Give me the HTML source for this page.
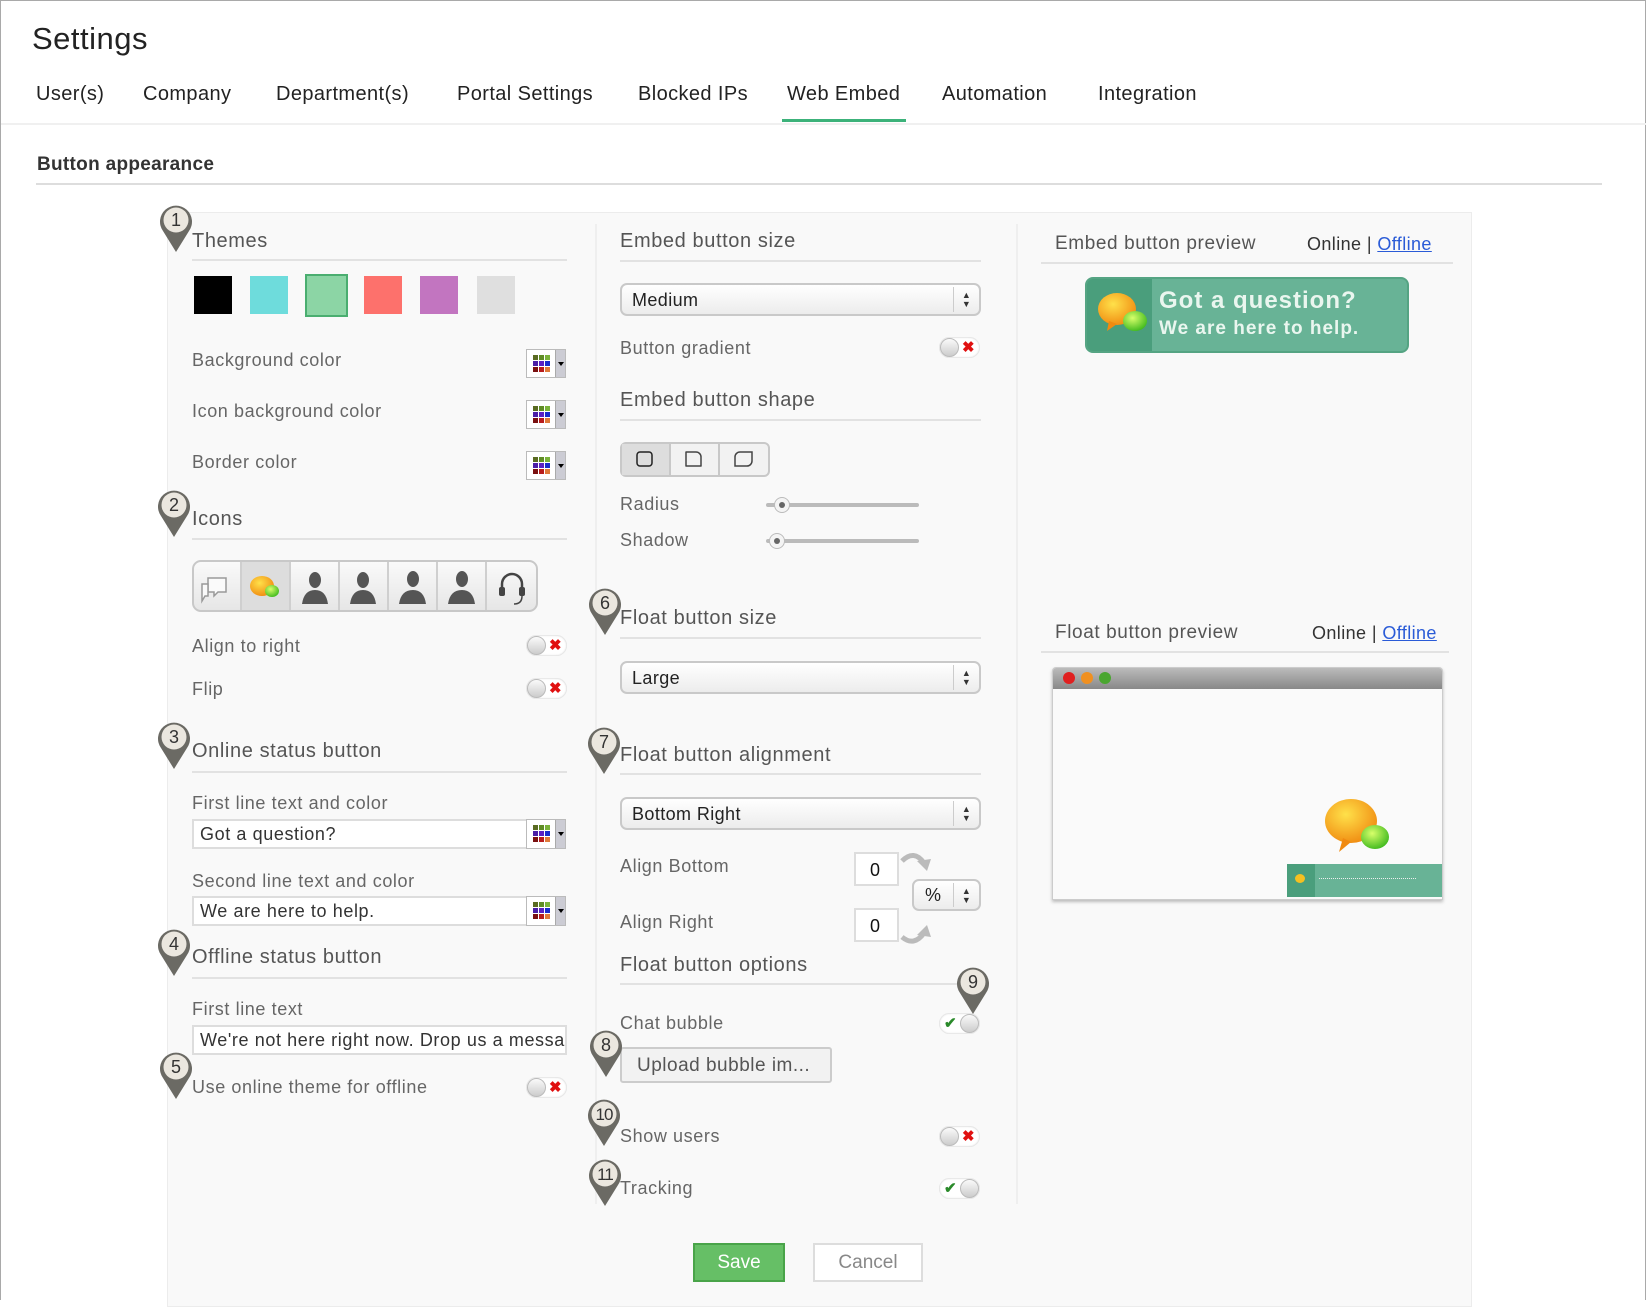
<!DOCTYPE html>
<html><head><meta charset="utf-8"><style>
*{box-sizing:border-box;margin:0;padding:0}
body{width:1646px;height:1300px;background:#fff;font-family:"Liberation Sans",sans-serif;position:relative;overflow:hidden;border:1px solid #a9a9a9;border-bottom:none}
.a{position:absolute;white-space:nowrap}
.tab{position:absolute;top:82px;font-size:20px;color:#222;letter-spacing:.4px}
.h{position:absolute;font-size:20px;color:#555;letter-spacing:.6px}
.l{position:absolute;font-size:18px;color:#666;letter-spacing:.6px}
.ln{position:absolute;height:2px;background:#e2e2e2}
.sw{position:absolute;top:275px;width:38px;height:38px}
.cp{position:absolute;width:40px;height:29px;border:1px solid #bbb;background:#fff}
.cp .g{position:absolute;left:6px;top:5px;width:17px;height:17px;display:grid;grid-template-columns:repeat(3,5px);gap:1px}
.cp .ar{position:absolute;right:0;top:0;width:10px;height:100%;background:#ccccd4;border-left:1px solid #aaa}
.cp .ar:after{content:"";position:absolute;left:2px;top:12px;border:3px solid transparent;border-top:4px solid #000}
.tg{position:absolute;width:41px;height:21px;border-radius:11px;background:#fff;box-shadow:inset 0 0 2px #bbb}
.tg .k{position:absolute;top:1px;width:19px;height:19px;border-radius:50%;background:linear-gradient(#fafafa,#ccc);border:1px solid #bbb}
.tg .x{position:absolute;top:0;font-size:15px;font-weight:bold;line-height:21px}
.inp{position:absolute;height:30px;border:2px solid #ddd;background:#fff;font-size:18px;color:#333;padding:3px 0 0 6px;overflow:hidden;white-space:nowrap;letter-spacing:.6px}
.sel{position:absolute;height:33px;border:2px solid #c9c9c9;border-radius:7px;background:linear-gradient(#fff,#ececec);font-size:18px;color:#222;padding:5px 0 0 10px;letter-spacing:.4px}
.sel .d{position:absolute;right:0;top:2px;bottom:2px;width:26px;border-left:1px solid #ccc;font-size:9px;line-height:9px;text-align:center;padding-top:4px;color:#333}
.pin{position:absolute;width:36px;height:52px}
</style></head><body>
<div class="a" style="left:31px;top:20px;font-size:31px;color:#222;letter-spacing:.5px">Settings</div>
<div class="tab" style="left:35px">User(s)</div>
<div class="tab" style="left:142px">Company</div>
<div class="tab" style="left:275px">Department(s)</div>
<div class="tab" style="left:456px">Portal Settings</div>
<div class="tab" style="left:637px">Blocked IPs</div>
<div class="tab" style="left:786px">Web Embed</div>
<div class="tab" style="left:941px">Automation</div>
<div class="tab" style="left:1097px">Integration</div>
<div class="a" style="left:0;top:122px;width:1646px;height:2px;background:#f0f0f0"></div>
<div class="a" style="left:781px;top:118px;width:124px;height:3px;background:#3cb27a"></div>
<div class="a" style="left:36px;top:153px;font-size:19px;font-weight:bold;color:#333;letter-spacing:.3px">Button appearance</div>
<div class="a" style="left:35px;top:182px;width:1566px;height:2px;background:#ddd"></div>

<div class="a" style="left:166px;top:211px;width:1305px;height:1095px;background:#f9f9f9;border:1px solid #ececec"></div>
<div class="a" style="left:594px;top:223px;width:2px;height:980px;background:#efefef"></div>
<div class="a" style="left:1015px;top:223px;width:2px;height:980px;background:#efefef"></div>

<!-- Left column -->
<div class="h" style="left:191px;top:229px">Themes</div><div class="ln" style="left:191px;top:258px;width:375px"></div>
<div class="sw" style="left:193px;background:#000"></div>
<div class="sw" style="left:249px;background:#6edcdc"></div>
<div class="sw" style="left:304px;background:#8cd5a5;border:2px solid #4aae70;width:43px;height:43px;top:273px"></div>
<div class="sw" style="left:363px;background:#fd716c"></div>
<div class="sw" style="left:419px;background:#c275c0"></div>
<div class="sw" style="left:476px;background:#dfdfdf"></div>

<div class="l" style="left:191px;top:349px">Background color</div>
<div class="l" style="left:191px;top:400px">Icon background color</div>
<div class="l" style="left:191px;top:451px">Border color</div>
<div class="cp" style="left:525px;top:348px"><div class="g"><i style="background:#5a6b22"></i><i style="background:#5f8d25"></i><i style="background:#7ab33a"></i><i style="background:#4b1fa6"></i><i style="background:#5a20c4"></i><i style="background:#1a2ccc"></i><i style="background:#7a1010"></i><i style="background:#b81c1c"></i><i style="background:#e07a3a"></i></div><div class="ar"></div></div>
<div class="cp" style="left:525px;top:399px"><div class="g"><i style="background:#5a6b22"></i><i style="background:#5f8d25"></i><i style="background:#7ab33a"></i><i style="background:#4b1fa6"></i><i style="background:#5a20c4"></i><i style="background:#1a2ccc"></i><i style="background:#7a1010"></i><i style="background:#b81c1c"></i><i style="background:#e07a3a"></i></div><div class="ar"></div></div>
<div class="cp" style="left:525px;top:450px"><div class="g"><i style="background:#5a6b22"></i><i style="background:#5f8d25"></i><i style="background:#7ab33a"></i><i style="background:#4b1fa6"></i><i style="background:#5a20c4"></i><i style="background:#1a2ccc"></i><i style="background:#7a1010"></i><i style="background:#b81c1c"></i><i style="background:#e07a3a"></i></div><div class="ar"></div></div>

<div class="h" style="left:191px;top:507px">Icons</div><div class="ln" style="left:191px;top:537px;width:375px"></div>
<svg class="a" style="left:191px;top:559px" width="346" height="52" viewBox="0 0 346 52">
<defs><linearGradient id="bg" x1="0" y1="0" x2="0" y2="1"><stop offset="0" stop-color="#fafafa"/><stop offset="1" stop-color="#e6e6e6"/></linearGradient>
<radialGradient id="or" cx=".4" cy=".35" r=".7"><stop offset="0" stop-color="#ffe14a"/><stop offset="1" stop-color="#f08a10"/></radialGradient>
<radialGradient id="gr" cx=".4" cy=".35" r=".7"><stop offset="0" stop-color="#d8ff6a"/><stop offset="1" stop-color="#3cb81c"/></radialGradient></defs>
<rect x="1" y="1" width="344" height="50" rx="8" fill="url(#bg)" stroke="#c8c8c8" stroke-width="2"/>
<rect x="49" y="2" width="49" height="48" fill="#ddd"/>
<g stroke="#cfcfcf" stroke-width="2"><line x1="49" y1="2" x2="49" y2="50"/><line x1="98" y1="2" x2="98" y2="50"/><line x1="147" y1="2" x2="147" y2="50"/><line x1="196" y1="2" x2="196" y2="50"/><line x1="245" y1="2" x2="245" y2="50"/><line x1="294" y1="2" x2="294" y2="50"/></g>
<path d="M16 18h18v14h-8l-4 4v-4h-6z" fill="#fafafa" stroke="#999" stroke-width="1.5"/><path d="M10 24h6v12h-3l-3 5z" fill="#fafafa" stroke="#999" stroke-width="1.5"/>
<ellipse cx="70" cy="26" rx="12" ry="10" fill="url(#or)"/><ellipse cx="80" cy="31" rx="7" ry="6" fill="url(#gr)"/>
<g fill="#555"><ellipse cx="123" cy="20" rx="6" ry="8"/><path d="M110 44q2-14 13-14q11 0 13 14z"/></g>
<g fill="#555"><ellipse cx="171" cy="20" rx="6" ry="8"/><path d="M158 44q2-14 13-14q11 0 13 14z"/></g>
<g fill="#555"><ellipse cx="221" cy="19" rx="6" ry="8"/><path d="M207 44q2-14 14-14q11 0 13 14z"/></g>
<g fill="#555"><ellipse cx="270" cy="19" rx="6" ry="8"/><path d="M256 44q2-14 14-14q11 0 13 14z"/></g>
<path d="M310 30v-6a10 10 0 0 1 20 0v6" fill="none" stroke="#444" stroke-width="2.5"/><rect x="307" y="27" width="6" height="9" rx="2" fill="#444"/><rect x="327" y="27" width="6" height="9" rx="2" fill="#444"/><path d="M330 36q0 8-8 8" fill="none" stroke="#444" stroke-width="1.5"/>
</svg>

<div class="l" style="left:191px;top:635px">Align to right</div>
<div class="tg" style="left:525px;top:634px"><div class="k" style="left:1px"></div><div class="x" style="left:23px;color:#e01010">✖</div></div>
<div class="l" style="left:191px;top:678px">Flip</div>
<div class="tg" style="left:525px;top:677px"><div class="k" style="left:1px"></div><div class="x" style="left:23px;color:#e01010">✖</div></div>

<div class="h" style="left:191px;top:739px">Online status button</div><div class="ln" style="left:191px;top:770px;width:375px"></div>
<div class="l" style="left:191px;top:792px">First line text and color</div>
<div class="inp" style="left:191px;top:818px;width:336px">Got a question?</div>
<div class="cp" style="left:525px;top:818px;height:30px"><div class="g"><i style="background:#5a6b22"></i><i style="background:#5f8d25"></i><i style="background:#7ab33a"></i><i style="background:#4b1fa6"></i><i style="background:#5a20c4"></i><i style="background:#1a2ccc"></i><i style="background:#7a1010"></i><i style="background:#b81c1c"></i><i style="background:#e07a3a"></i></div><div class="ar"></div></div>
<div class="l" style="left:191px;top:870px">Second line text and color</div>
<div class="inp" style="left:191px;top:895px;width:336px">We are here to help.</div>
<div class="cp" style="left:525px;top:895px;height:30px"><div class="g"><i style="background:#5a6b22"></i><i style="background:#5f8d25"></i><i style="background:#7ab33a"></i><i style="background:#4b1fa6"></i><i style="background:#5a20c4"></i><i style="background:#1a2ccc"></i><i style="background:#7a1010"></i><i style="background:#b81c1c"></i><i style="background:#e07a3a"></i></div><div class="ar"></div></div>

<div class="h" style="left:191px;top:945px">Offline status button</div><div class="ln" style="left:191px;top:976px;width:375px"></div>
<div class="l" style="left:191px;top:998px">First line text</div>
<div class="inp" style="left:191px;top:1024px;width:375px">We're not here right now. Drop us a message</div>
<div class="l" style="left:191px;top:1076px">Use online theme for offline</div>
<div class="tg" style="left:525px;top:1076px"><div class="k" style="left:1px"></div><div class="x" style="left:23px;color:#e01010">✖</div></div>

<!-- Middle column -->
<div class="h" style="left:619px;top:229px">Embed button size</div><div class="ln" style="left:619px;top:259px;width:361px"></div>
<div class="sel" style="left:619px;top:282px;width:361px">Medium<div class="d">▲<br>▼</div></div>
<div class="l" style="left:619px;top:337px">Button gradient</div>
<div class="tg" style="left:938px;top:336px"><div class="k" style="left:1px"></div><div class="x" style="left:23px;color:#e01010">✖</div></div>
<div class="h" style="left:619px;top:388px">Embed button shape</div><div class="ln" style="left:619px;top:418px;width:361px"></div>
<svg class="a" style="left:619px;top:441px" width="150" height="35">
<rect x="1" y="1" width="148" height="33" rx="5" fill="#f2f2f2" stroke="#c8c8c8" stroke-width="2"/>
<rect x="2" y="2" width="48" height="31" fill="#ddd"/>
<line x1="50" y1="2" x2="50" y2="33" stroke="#c8c8c8" stroke-width="2"/><line x1="99" y1="2" x2="99" y2="33" stroke="#c8c8c8" stroke-width="2"/>
<rect x="17" y="10" width="15" height="14" rx="3" fill="none" stroke="#222" stroke-width="1.5"/>
<path d="M66 10h10a5 5 0 0 1 5 5v9h-15z" fill="none" stroke="#444" stroke-width="1.5" stroke-linejoin="round"/>
<path d="M120 10h12v9a5 5 0 0 1-5 5h-12v-9a5 5 0 0 1 5-5z" fill="none" stroke="#444" stroke-width="1.5"/>
</svg>
<div class="l" style="left:619px;top:493px">Radius</div>
<div class="l" style="left:619px;top:529px">Shadow</div>
<div class="a" style="left:765px;top:502px;width:153px;height:4px;border-radius:2px;background:#bbb"></div>
<div class="a" style="left:773px;top:496px;width:16px;height:16px;border-radius:50%;background:#f4f4f4;border:1px solid #bbb"><div style="margin:4px;width:6px;height:6px;border-radius:50%;background:#666"></div></div>
<div class="a" style="left:765px;top:538px;width:153px;height:4px;border-radius:2px;background:#bbb"></div>
<div class="a" style="left:768px;top:532px;width:16px;height:16px;border-radius:50%;background:#f4f4f4;border:1px solid #bbb"><div style="margin:4px;width:6px;height:6px;border-radius:50%;background:#666"></div></div>

<div class="h" style="left:619px;top:606px">Float button size</div><div class="ln" style="left:619px;top:636px;width:361px"></div>
<div class="sel" style="left:619px;top:660px;width:361px">Large<div class="d">▲<br>▼</div></div>
<div class="h" style="left:619px;top:743px">Float button alignment</div><div class="ln" style="left:619px;top:772px;width:361px"></div>
<div class="sel" style="left:619px;top:796px;width:361px">Bottom Right<div class="d">▲<br>▼</div></div>
<div class="l" style="left:619px;top:855px">Align Bottom</div>
<div class="l" style="left:619px;top:911px">Align Right</div>
<div class="inp" style="left:853px;top:851px;width:45px;height:34px;padding:6px 0 0 14px;color:#111">0</div>
<div class="inp" style="left:853px;top:907px;width:45px;height:34px;padding:6px 0 0 14px;color:#111">0</div>
<svg class="a" style="left:898px;top:846px" width="34" height="100"><path d="M3 14q12-12 22 2" fill="none" stroke="#bbb" stroke-width="5"/><path d="M18 14l10 10l4-12z" fill="#bbb"/><path d="M3 90q12 10 22-4" fill="none" stroke="#bbb" stroke-width="5"/><path d="M18 88l10-10l4 12z" fill="#bbb"/></svg>
<div class="sel" style="left:911px;top:878px;width:69px;height:32px;padding:4px 0 0 11px">%<div class="d">▲<br>▼</div></div>
<div class="h" style="left:619px;top:953px">Float button options</div><div class="ln" style="left:619px;top:982px;width:345px"></div>
<div class="l" style="left:619px;top:1012px">Chat bubble</div>
<div class="tg" style="left:938px;top:1012px"><div class="x" style="left:5px;color:#2a8a2a">✔</div><div class="k" style="left:21px"></div></div>
<div class="a" style="left:619px;top:1046px;width:212px;height:36px;border:2px solid #ccc;border-radius:3px;background:#f2f2f2;font-size:19px;color:#555;padding:6px 0 0 15px;letter-spacing:.5px">Upload bubble im...</div>
<div class="l" style="left:619px;top:1125px">Show users</div>
<div class="tg" style="left:938px;top:1125px"><div class="k" style="left:1px"></div><div class="x" style="left:23px;color:#e01010">✖</div></div>
<div class="l" style="left:619px;top:1177px">Tracking</div>
<div class="tg" style="left:938px;top:1177px"><div class="x" style="left:5px;color:#2a8a2a">✔</div><div class="k" style="left:21px"></div></div>

<div class="a" style="left:692px;top:1242px;width:92px;height:39px;background:#66bf66;border:2px solid #49a449;color:#fff;font-size:19px;text-align:center;line-height:35px">Save</div>
<div class="a" style="left:812px;top:1242px;width:110px;height:39px;background:#fff;border:2px solid #ddd;color:#888;font-size:19px;text-align:center;line-height:35px">Cancel</div>

<!-- Right column -->
<div class="h" style="left:1054px;top:232px;font-size:19px">Embed button preview</div>
<div class="a" style="left:1306px;top:233px;font-size:18px;color:#333;letter-spacing:.4px">Online | <span style="color:#2a5bd7;text-decoration:underline">Offline</span></div>
<div class="ln" style="left:1040px;top:261px;width:412px"></div>
<div class="a" style="left:1084px;top:276px;width:324px;height:76px;border-radius:8px;background:#68b396;border:2px solid #55a483;overflow:hidden">
<div style="position:absolute;left:0;top:0;width:65px;height:76px;background:#4a9e7c"></div>
<svg style="position:absolute;left:8px;top:10px" width="56" height="50"><defs><radialGradient id="or2" cx=".4" cy=".35" r=".7"><stop offset="0" stop-color="#ffe14a"/><stop offset="1" stop-color="#f08a10"/></radialGradient><radialGradient id="gr2" cx=".4" cy=".35" r=".7"><stop offset="0" stop-color="#d8ff6a"/><stop offset="1" stop-color="#3cb81c"/></radialGradient></defs><ellipse cx="22" cy="20" rx="19" ry="16" fill="url(#or2)"/><path d="M14 32l-2 10l10-7z" fill="#f08a10"/><ellipse cx="40" cy="32" rx="12" ry="10" fill="url(#gr2)"/></svg>
<div style="position:absolute;left:72px;top:8px;font-size:24px;font-weight:bold;color:#eaf6ef;letter-spacing:1px">Got a question?</div>
<div style="position:absolute;left:72px;top:39px;font-size:19px;font-weight:bold;color:#eaf6ef;letter-spacing:1px">We are here to help.</div>
</div>

<div class="h" style="left:1054px;top:621px;font-size:19px">Float button preview</div>
<div class="a" style="left:1311px;top:622px;font-size:18px;color:#333;letter-spacing:.4px">Online | <span style="color:#2a5bd7;text-decoration:underline">Offline</span></div>
<div class="ln" style="left:1040px;top:650px;width:408px"></div>
<div class="a" style="left:1051px;top:666px;width:391px;height:233px;background:#fafafa;border:1px solid #ccc;box-shadow:0 2px 3px #bbb;border-radius:4px 4px 0 0;overflow:hidden">
<div style="height:21px;background:linear-gradient(#bbb,#888)"></div>
<div style="position:absolute;left:10px;top:4px;width:12px;height:12px;border-radius:50%;background:#e02020"></div>
<div style="position:absolute;left:28px;top:4px;width:12px;height:12px;border-radius:50%;background:#f09020"></div>
<div style="position:absolute;left:46px;top:4px;width:12px;height:12px;border-radius:50%;background:#4aa630"></div>
<div style="position:absolute;left:234px;top:196px;width:155px;height:33px;background:#68b396"></div>
<div style="position:absolute;left:234px;top:196px;width:28px;height:33px;background:#4a9e7c"></div>
<div style="position:absolute;left:242px;top:206px;width:10px;height:9px;border-radius:50%;background:#f5c020"></div>
<div style="position:absolute;left:266px;top:210px;width:97px;border-top:1px dotted #eee"></div>
<svg style="position:absolute;left:270px;top:128px" width="70" height="62"><ellipse cx="28" cy="25" rx="26" ry="22" fill="url(#or2)"/><path d="M20 42l-4 14l12-10z" fill="#f08a10"/><ellipse cx="52" cy="41" rx="14" ry="12" fill="url(#gr2)"/></svg>
</div>

<!-- Pins -->
<svg width="0" height="0" style="position:absolute"><defs><g id="pn"><path d="M18 50L5 29A16 16 0 1 1 31 29Z" fill="#6b6a64"/><circle cx="18" cy="18" r="12.5" fill="#ebe7df"/></g></defs></svg>
<svg class="pin" style="left:157px;top:201px"><use href="#pn"/><text x="18" y="24" font-size="18" text-anchor="middle" fill="#333" font-family="Liberation Sans">1</text></svg>
<svg class="pin" style="left:155px;top:486px"><use href="#pn"/><text x="18" y="24" font-size="18" text-anchor="middle" fill="#333" font-family="Liberation Sans">2</text></svg>
<svg class="pin" style="left:155px;top:718px"><use href="#pn"/><text x="18" y="24" font-size="18" text-anchor="middle" fill="#333" font-family="Liberation Sans">3</text></svg>
<svg class="pin" style="left:155px;top:925px"><use href="#pn"/><text x="18" y="24" font-size="18" text-anchor="middle" fill="#333" font-family="Liberation Sans">4</text></svg>
<svg class="pin" style="left:157px;top:1048px"><use href="#pn"/><text x="18" y="24" font-size="18" text-anchor="middle" fill="#333" font-family="Liberation Sans">5</text></svg>
<svg class="pin" style="left:586px;top:584px"><use href="#pn"/><text x="18" y="24" font-size="18" text-anchor="middle" fill="#333" font-family="Liberation Sans">6</text></svg>
<svg class="pin" style="left:585px;top:723px"><use href="#pn"/><text x="18" y="24" font-size="18" text-anchor="middle" fill="#333" font-family="Liberation Sans">7</text></svg>
<svg class="pin" style="left:587px;top:1026px"><use href="#pn"/><text x="18" y="24" font-size="18" text-anchor="middle" fill="#333" font-family="Liberation Sans">8</text></svg>
<svg class="pin" style="left:954px;top:963px"><use href="#pn"/><text x="18" y="24" font-size="18" text-anchor="middle" fill="#333" font-family="Liberation Sans">9</text></svg>
<svg class="pin" style="left:585px;top:1095px"><use href="#pn"/><text x="18" y="24" font-size="17" text-anchor="middle" fill="#333" font-family="Liberation Sans" letter-spacing="-1">10</text></svg>
<svg class="pin" style="left:586px;top:1155px"><use href="#pn"/><text x="18" y="24" font-size="17" text-anchor="middle" fill="#333" font-family="Liberation Sans" letter-spacing="-1">11</text></svg>
</body></html>
